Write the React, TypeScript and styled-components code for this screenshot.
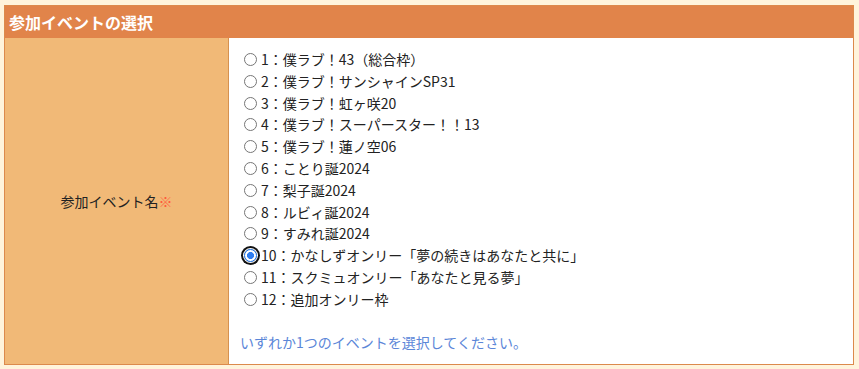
import React from "react";
import styled, { createGlobalStyle } from "styled-components";

const GlobalStyle = createGlobalStyle`
  html, body {
    margin: 0;
    padding: 0;
    background: #fff4dc;
  }
  body {
    font-family: "Noto Sans CJK JP", "Noto Sans", sans-serif;
    color: #222;
  }
`;

const Page = styled.div`
  padding: 5px 5px 3px 4px;
`;

const Table = styled.div`
  border: 1px solid #dc8a4c;
  background: #ffffff;
`;

const Header = styled.div`
  height: 32px;
  background: #e1844a;
  color: #ffffff;
  font-weight: bold;
  font-size: 16px;
  line-height: 32px;
  padding-left: 4px;
`;

const Row = styled.div`
  display: grid;
  grid-template-columns: 224px 1fr;
`;

const LabelCell = styled.div`
  background: #f1b977;
  border-right: 1px solid #d6914f;
  display: flex;
  align-items: center;
  justify-content: center;
  font-size: 14px;
  color: #222;
`;

const Required = styled.span`
  color: #ff5a3c;
`;

const ValueCell = styled.div`
  padding: 11px 10px 10px 10px;
  font-size: 14px;
  line-height: 21.8px;
`;

const Option = styled.label`
  display: block;
  height: 21.8px;
  white-space: nowrap;
`;

const Radio = styled.input`
  appearance: none;
  -webkit-appearance: none;
  box-sizing: border-box;
  width: 13px;
  height: 13px;
  margin: 0 4px 0 5px;
  vertical-align: -1px;
  border: 1px solid #767676;
  border-radius: 50%;
  background: #ffffff;
  &:checked {
    border: 1px solid #1a6fe0;
    background: radial-gradient(circle, #2f7df0 0 3.2px, #ffffff 3.8px);
    box-shadow: 0 0 0 1px #ffffff, 0 0 0 3px #111111;
    border-radius: 50%;
  }
`;

const Spacer = styled.div`
  height: 21.8px;
`;

const Hint = styled.div`
  color: #5b86d8;
  height: 21.8px;
  padding-left: 1px;
`;

const events = [
  "1：僕ラブ！43（総合枠）",
  "2：僕ラブ！サンシャインSP31",
  "3：僕ラブ！虹ヶ咲20",
  "4：僕ラブ！スーパースター！！13",
  "5：僕ラブ！蓮ノ空06",
  "6：ことり誕2024",
  "7：梨子誕2024",
  "8：ルビィ誕2024",
  "9：すみれ誕2024",
  "10：かなしずオンリー「夢の続きはあなたと共に」",
  "11：スクミュオンリー「あなたと見る夢」",
  "12：追加オンリー枠",
];

export default function App() {
  const [selected, setSelected] = React.useState(9);
  return (
    <>
      <GlobalStyle />
      <Page>
        <Table>
          <Header>参加イベントの選択</Header>
          <Row>
            <LabelCell>
              参加イベント名<Required>※</Required>
            </LabelCell>
            <ValueCell>
              {events.map((ev, i) => (
                <Option key={ev}>
                  <Radio
                    type="radio"
                    name="event"
                    checked={selected === i}
                    onChange={() => setSelected(i)}
                  />
                  {ev}
                </Option>
              ))}
              <Spacer />
              <Hint>いずれか1つのイベントを選択してください。</Hint>
            </ValueCell>
          </Row>
        </Table>
      </Page>
    </>
  );
}
